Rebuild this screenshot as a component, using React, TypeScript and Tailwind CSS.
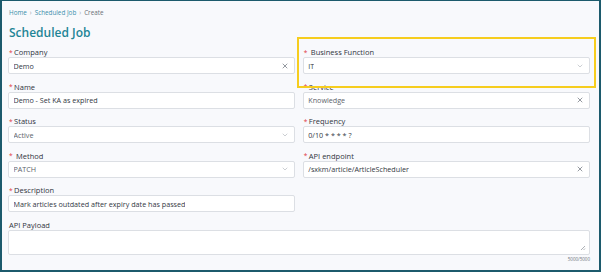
import React from 'react';

type Field = {
  label: string;
  value: string;
  required?: boolean;
  spaced?: boolean;
  icon?: 'clear' | 'chevron' | 'none';
  muted?: boolean;
};

const fields: Field[] = [
  { label: 'Company', value: 'Demo', required: true, icon: 'clear' },
  { label: 'Business Function', value: 'IT', required: true, spaced: true, icon: 'chevron' },
  { label: 'Name', value: 'Demo - Set KA as expired', required: true, icon: 'none' },
  { label: 'Service', value: 'Knowledge', required: true, icon: 'clear', muted: true },
  { label: 'Status', value: 'Active', required: true, icon: 'chevron', muted: true },
  { label: 'Frequency', value: '0/10 * * * * ?', required: true, icon: 'none' },
  { label: 'Method', value: 'PATCH', required: true, spaced: true, icon: 'chevron', muted: true },
  { label: 'API endpoint', value: '/sxkm/article/ArticleScheduler', required: true, icon: 'clear' },
  { label: 'Description', value: 'Mark articles outdated after expiry date has passed', required: true, icon: 'none' },
];

function ClearIcon() {
  return (
    <svg width="6" height="6" viewBox="0 0 6 6" className="shrink-0">
      <path d="M1 1 L5 5 M5 1 L1 5" stroke="#8a8f96" strokeWidth="0.9" strokeLinecap="round" />
    </svg>
  );
}

function ChevronIcon() {
  return (
    <svg width="6" height="4" viewBox="0 0 6 4" className="shrink-0">
      <path d="M1 1 L3 3 L5 1" stroke="#bfc3c8" strokeWidth="0.8" fill="none" strokeLinecap="round" />
    </svg>
  );
}

function Label({ text, required, spaced }: { text: string; required?: boolean; spaced?: boolean }) {
  return (
    <div className="h-[10px] flex items-center text-[7.5px] leading-[10px] text-[#30353c] pl-[1px]">
      {required && <span className="text-[#e0383e] text-[6.5px] mr-[1.5px] mt-[1px]">*</span>}
      {spaced && <span className="w-[2px]" />}
      <span>{text}</span>
    </div>
  );
}

function Input({ f }: { f: Field }) {
  return (
    <div className="h-[17px] bg-white border border-[#dcdfe4] rounded-[2px] flex items-center justify-between pl-[4.5px] pr-[6px]">
      <span className={`text-[7.2px] leading-[10px] truncate ${f.muted ? 'text-[#5d636b]' : 'text-[#33383f]'}`}>
        {f.value}
      </span>
      {f.icon === 'clear' && <ClearIcon />}
      {f.icon === 'chevron' && <ChevronIcon />}
    </div>
  );
}

export default function App() {
  return (
    <div
      className="w-[601px] h-[272px] bg-[#f8f9fc] border-l-2 border-r-2 border-b-2 border-t border-[#1c5a6c] relative overflow-hidden"
      style={{ fontFamily: '"Open Sans", "Noto Sans", sans-serif' }}
    >
      <div className="pl-[6px] pr-[9px] pt-[7px]">
        {/* breadcrumb */}
        <div className="h-[10px] flex items-center gap-[3px] text-[6.3px] leading-[10px] pl-[1px]">
          <span className="text-[#3b8fab]">Home</span>
          <span className="text-[#9aa0a6]">›</span>
          <span className="text-[#3b8fab]">Scheduled Job</span>
          <span className="text-[#9aa0a6]">›</span>
          <span className="text-[#6b7178]">Create</span>
        </div>

        <h1 className="mt-[7px] h-[16px] leading-[16px] text-[12px] font-semibold text-[#1f8596] pl-[1px]">
          Scheduled Job
        </h1>

        <div className="mt-[6px] grid grid-cols-2 gap-x-[7.5px] gap-y-[7.5px]">
          {fields.map((f) => (
            <div key={f.label}>
              <Label text={f.label} required={f.required} spaced={f.spaced} />
              <Input f={f} />
            </div>
          ))}
          <div className="col-span-2">
            <Label text="API Payload" />
            <div className="h-[25px] bg-white border border-[#dcdfe4] rounded-[2px] relative">
              <svg width="6" height="6" viewBox="0 0 6 6" className="absolute right-[3px] bottom-[3px]">
                <path d="M5 1 L1 5 M5 3.5 L3.5 5" stroke="#8a8f96" strokeWidth="0.7" />
              </svg>
            </div>
            <div className="text-right text-[4.5px] leading-[9px] text-[#6b7178]">5000/5000</div>
          </div>
        </div>
      </div>

      {/* highlight annotation */}
      <div className="absolute left-[295px] top-[36px] w-[299px] h-[51px] border-2 border-[#f6cd1e] pointer-events-none" />
    </div>
  );
}
